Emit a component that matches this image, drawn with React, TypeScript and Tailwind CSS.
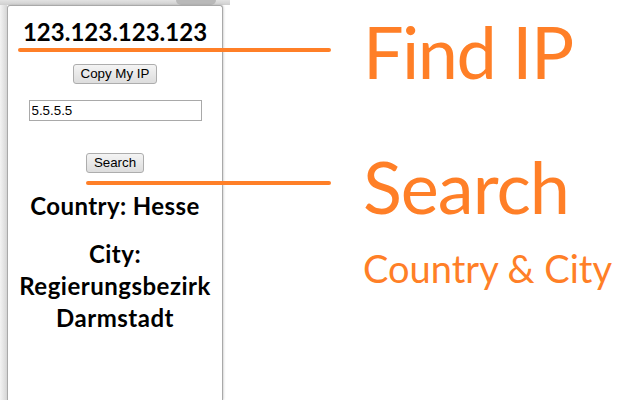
import React from "react";

const btn =
  "h-[20px] px-[7px] rounded-[3px] border border-[#adadad] bg-gradient-to-b from-[#f4f4f4] to-[#dddddd] text-[13.33px] leading-none text-black [font-family:'Liberation_Sans',Arial,sans-serif]";

export default function App() {
  return (
    <div className="relative w-[640px] h-[400px] overflow-hidden bg-white flex [font-family:Lato,sans-serif]">
      {/* Popup window */}
      <div className="w-[230px] h-full flex flex-col">
        {/* browser toolbar strip */}
        <div className="h-[5px] w-[230px] bg-gradient-to-b from-[#e2e2e2] to-[#cfcfcf] flex justify-end pr-[14px]">
          <div className="w-[40px] h-[5px] rounded-b-full bg-[#b9b9b9]" />
        </div>
        <div className="flex flex-1">
          <div className="w-[7px] bg-gradient-to-r from-[#f3f3f3] to-[#d6d6d6]" />
          <div className="w-[216px] bg-white border border-b-0 border-[#a9a9a9] rounded-t-[3px] flex flex-col items-center shadow-[1px_0_2px_rgba(0,0,0,0.15)]">
            <h2 className="mt-[10px] text-[24px] leading-8 font-bold text-black">123.123.123.123</h2>
            <button className={`mt-[16px] ${btn}`}>Copy My IP</button>
            <input
              readOnly
              value="5.5.5.5"
              className="mt-[16px] w-[173px] h-[21px] border border-[#a9a9a9] px-[2px] text-[13.33px] text-black bg-white outline-none [font-family:'Liberation_Sans',Arial,sans-serif]"
            />
            <button className={`mt-[32px] ${btn}`}>Search</button>
            <h2 className="mt-[17px] text-[24px] leading-8 font-bold tracking-[0.4px] text-black">Country: Hesse</h2>
            <h2 className="mt-[16px] text-[24px] leading-8 font-bold tracking-[0.5px] text-black text-center">
              City:
              <br />
              Regierungsbezirk
              <br />
              Darmstadt
            </h2>
          </div>
        </div>
      </div>

      {/* Annotations */}
      <div className="flex flex-col pl-[133px] text-[#ff7f27]">
        <p className="mt-[15px] text-[72px] leading-none tracking-[-1.5px]">Find IP</p>
        <p className="mt-[63px] text-[72px] leading-none tracking-[-1px]">Search</p>
        <p className="mt-[27px] text-[38px] leading-none">Country &amp; City</p>
      </div>

      {/* pointer lines over the popup */}
      <div className="absolute left-[18px] top-[48px] w-[313px] h-[4px] rounded-full bg-[#ff7f27]" />
      <div className="absolute left-[86px] top-[181px] w-[245px] h-[4px] rounded-full bg-[#ff7f27]" />
    </div>
  );
}
